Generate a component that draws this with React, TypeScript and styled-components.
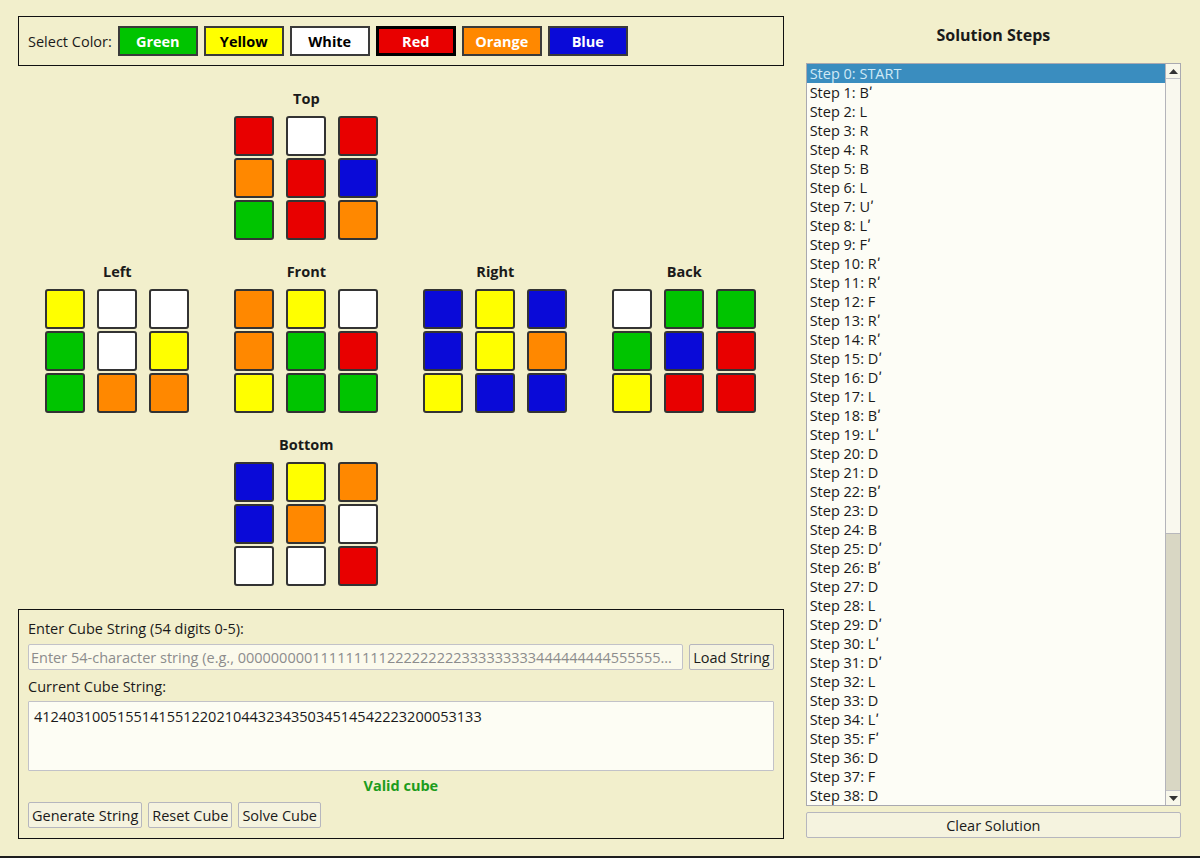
import styled, { createGlobalStyle } from 'styled-components';

const GlobalStyle = createGlobalStyle`
  html, body {
    margin: 0;
    padding: 0;
    background: #f2efcc;
  }
  body {
    font-family: 'Open Sans', 'DejaVu Sans', sans-serif;
    font-size: 14.5px;
    color: #1a1a1a;
  }
  * {
    box-sizing: border-box;
  }
`;

type Sticker = 'G' | 'Y' | 'W' | 'R' | 'O' | 'B';

const STICKER_COLORS: Record<Sticker, string> = {
  G: '#00c400',
  Y: '#ffff00',
  W: '#ffffff',
  R: '#e80000',
  O: '#ff8800',
  B: '#0a0ad8',
};

const palette = [
  { name: 'Green', bg: '#00c400', fg: '#ffffff' },
  { name: 'Yellow', bg: '#ffff00', fg: '#000000' },
  { name: 'White', bg: '#ffffff', fg: '#000000' },
  { name: 'Red', bg: '#e80000', fg: '#ffffff' },
  { name: 'Orange', bg: '#ff8800', fg: '#ffffff' },
  { name: 'Blue', bg: '#0a0ad8', fg: '#ffffff' },
];

const faces: { name: string; col: number; row: number; stickers: Sticker[] }[] = [
  { name: 'Top', col: 2, row: 1, stickers: ['R', 'W', 'R', 'O', 'R', 'B', 'G', 'R', 'O'] },
  { name: 'Left', col: 1, row: 2, stickers: ['Y', 'W', 'W', 'G', 'W', 'Y', 'G', 'O', 'O'] },
  { name: 'Front', col: 2, row: 2, stickers: ['O', 'Y', 'W', 'O', 'G', 'R', 'Y', 'G', 'G'] },
  { name: 'Right', col: 3, row: 2, stickers: ['B', 'Y', 'B', 'B', 'Y', 'O', 'Y', 'B', 'B'] },
  { name: 'Back', col: 4, row: 2, stickers: ['W', 'G', 'G', 'G', 'B', 'R', 'Y', 'R', 'R'] },
  { name: 'Bottom', col: 2, row: 3, stickers: ['B', 'Y', 'O', 'B', 'O', 'W', 'W', 'W', 'R'] },
];

// prime moves are shown with a raised tick in the original list
const moves = [
  'START', 'Bʹ', 'L', 'R', 'R', 'B', 'L', 'Uʹ', 'Lʹ', 'Fʹ',
  'Rʹ', 'Rʹ', 'F', 'Rʹ', 'Rʹ', 'Dʹ', 'Dʹ', 'L', 'Bʹ', 'Lʹ',
  'D', 'D', 'Bʹ', 'D', 'B', 'Dʹ', 'Bʹ', 'D', 'L', 'Dʹ',
  'Lʹ', 'Dʹ', 'L', 'D', 'Lʹ', 'Fʹ', 'D', 'F', 'D',
];

const Window = styled.div`
  height: 858px;
  padding: 16px 19px 0 18px;
  display: flex;
  gap: 22px;
  border-bottom: 2px solid #1e1e1e;
`;

const LeftColumn = styled.div`
  width: 767px;
  display: flex;
  flex-direction: column;
`;

const RightColumn = styled.div`
  width: 376px;
  display: flex;
  flex-direction: column;
`;

const Frame = styled.div`
  border: 1px solid #111;
  padding: 9px;
`;

const ColorBar = styled(Frame)`
  height: 50px;
  display: flex;
  align-items: center;
  gap: 6px;
`;

const BarLabel = styled.span`
  line-height: 19px;
`;

const ColorButton = styled.button<{ $bg: string; $fg: string; $selected?: boolean }>`
  width: 80px;
  height: 30px;
  padding: 0;
  font-family: inherit;
  font-size: 14.5px;
  font-weight: 700;
  background: ${(p) => p.$bg};
  color: ${(p) => p.$fg};
  border: ${(p) => (p.$selected ? '3px solid #000' : '2px solid #3a3a3a')};
`;

const FaceGrid = styled.div`
  display: grid;
  grid-template-columns: repeat(4, 144px);
  column-gap: 45px;
  row-gap: 22px;
  justify-content: center;
  margin: 23px 0 23px;
`;

const Face = styled.div<{ $col: number; $row: number }>`
  grid-column: ${(p) => p.$col};
  grid-row: ${(p) => p.$row};
  display: flex;
  flex-direction: column;
  align-items: center;
`;

const FaceLabel = styled.div`
  font-weight: 700;
  line-height: 20px;
  margin-bottom: 7px;
`;

const StickerGrid = styled.div`
  display: grid;
  grid-template-columns: repeat(3, 40px);
  grid-auto-rows: 40px;
  column-gap: 12px;
  row-gap: 2px;
`;

const StickerCell = styled.div<{ $color: string }>`
  background: ${(p) => p.$color};
  border: 2px solid #333;
  border-radius: 3px;
`;

const InputFrame = styled(Frame)`
  height: 230px;
  display: flex;
  flex-direction: column;
`;

const FieldLabel = styled.div`
  line-height: 19px;
`;

const InputRow = styled.div`
  display: flex;
  gap: 6px;
  margin: 6px 0 7px;
`;

const TextInput = styled.input`
  flex: 1;
  height: 26px;
  padding: 0 2px;
  font-family: inherit;
  font-size: 14.5px;
  background: #fbfaec;
  border: 1px solid #c2c2c8;
  border-radius: 2px;
  outline: none;
  &::placeholder {
    color: #8c8c8c;
  }
`;

const TkButton = styled.button<{ $wide?: boolean }>`
  height: 26px;
  padding: 0 3px;
  font-family: inherit;
  font-size: 14.5px;
  color: #1a1a1a;
  background: #f5f3df;
  border: 1px solid #b6b6be;
  border-radius: 2px;
  width: ${(p) => (p.$wide ? '100%' : 'auto')};
`;

const CubeText = styled.div`
  height: 70px;
  margin: 5px 0 5px;
  padding: 5px 5px;
  line-height: 19px;
  background: #fdfdf4;
  border: 1px solid #c2c2c8;
  border-radius: 1px;
`;

const Status = styled.div`
  text-align: center;
  font-weight: 700;
  color: #1c9c1c;
  line-height: 19px;
`;

const ButtonRow = styled.div`
  display: flex;
  gap: 6px;
  margin-top: 7px;
`;

const PanelTitle = styled.div`
  text-align: center;
  font-weight: 700;
  font-size: 16px;
  line-height: 20px;
  padding-top: 9px;
  margin-bottom: 18px;
`;

const ListBox = styled.div`
  height: 743px;
  display: flex;
  background: #fdfdf6;
  border: 1px solid #a9a9b0;
`;

const ListRows = styled.div`
  flex: 1;
  overflow: hidden;
`;

const ListRow = styled.div<{ $active?: boolean }>`
  height: 19px;
  line-height: 19px;
  padding-left: 3px;
  white-space: nowrap;
  background: ${(p) => (p.$active ? '#3a8dbf' : 'transparent')};
  color: ${(p) => (p.$active ? '#cfe9f6' : '#1a1a1a')};
`;

const ScrollBar = styled.div`
  width: 15px;
  display: flex;
  flex-direction: column;
  border-left: 1px solid #b4b4ba;
`;

const ArrowBox = styled.div`
  height: 15px;
  display: flex;
  align-items: center;
  justify-content: center;
  background: #f8f7ea;
  border-bottom: 1px solid #c4c4c8;
  &:last-child {
    border-bottom: none;
    border-top: 1px solid #c4c4c8;
  }
`;

const Thumb = styled.div`
  background: #f9f8ee;
  border-bottom: 1px solid #b8b8bc;
`;

const Trough = styled.div`
  flex: 1;
  background: #d9d7c4;
`;

const ClearWrap = styled.div`
  margin-top: 6px;
`;

function Arrow({ up }: { up?: boolean }) {
  return (
    <svg width="9" height="5" viewBox="0 0 9 5">
      <polygon points={up ? '0,5 9,5 4.5,0' : '0,0 9,0 4.5,5'} fill="#333" />
    </svg>
  );
}

export default function App() {
  const thumbRatio = 455 / 712;
  return (
    <>
      <GlobalStyle />
      <Window>
        <LeftColumn>
          <ColorBar>
            <BarLabel>Select Color:</BarLabel>
            {palette.map((c) => (
              <ColorButton key={c.name} $bg={c.bg} $fg={c.fg} $selected={c.name === 'Red'}>
                {c.name}
              </ColorButton>
            ))}
          </ColorBar>

          <FaceGrid>
            {faces.map((f) => (
              <Face key={f.name} $col={f.col} $row={f.row}>
                <FaceLabel>{f.name}</FaceLabel>
                <StickerGrid>
                  {f.stickers.map((s, i) => (
                    <StickerCell key={i} $color={STICKER_COLORS[s]} />
                  ))}
                </StickerGrid>
              </Face>
            ))}
          </FaceGrid>

          <InputFrame>
            <FieldLabel>Enter Cube String (54 digits 0-5):</FieldLabel>
            <InputRow>
              <TextInput placeholder="Enter 54-character string (e.g., 000000000111111111222222222333333333444444444555555..." />
              <TkButton>Load String</TkButton>
            </InputRow>
            <FieldLabel>Current Cube String:</FieldLabel>
            <CubeText>412403100515514155122021044323435034514542223200053133</CubeText>
            <Status>Valid cube</Status>
            <ButtonRow>
              <TkButton>Generate String</TkButton>
              <TkButton>Reset Cube</TkButton>
              <TkButton>Solve Cube</TkButton>
            </ButtonRow>
          </InputFrame>
        </LeftColumn>

        <RightColumn>
          <PanelTitle>Solution Steps</PanelTitle>
          <ListBox>
            <ListRows>
              {moves.map((m, i) => (
                <ListRow key={i} $active={i === 0}>
                  Step {i}: {m}
                </ListRow>
              ))}
            </ListRows>
            <ScrollBar>
              <ArrowBox>
                <Arrow up />
              </ArrowBox>
              <Thumb style={{ height: `${Math.round(thumbRatio * 712)}px` }} />
              <Trough />
              <ArrowBox>
                <Arrow />
              </ArrowBox>
            </ScrollBar>
          </ListBox>
          <ClearWrap>
            <TkButton $wide>Clear Solution</TkButton>
          </ClearWrap>
        </RightColumn>
      </Window>
    </>
  );
}
